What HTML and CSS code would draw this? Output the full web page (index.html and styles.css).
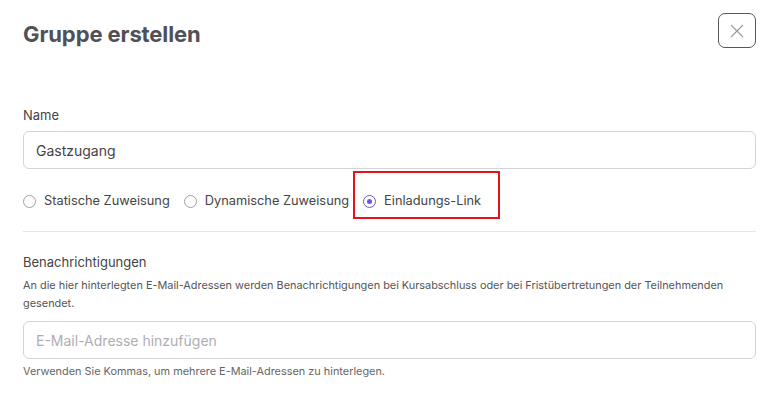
FILE: index.html
```html
<!DOCTYPE html>
<html lang="de">
<head>
<meta charset="utf-8">
<title>Gruppe erstellen</title>
<link rel="stylesheet" href="styles.css">
</head>
<body>
<div class="dialog">
  <div class="header">
    <h1 class="title">Gruppe erstellen</h1>
    <button class="close" aria-label="Schließen">
      <svg width="14" height="14" viewBox="0 0 14 14"><path d="M1 1 L13 13 M13 1 L1 13" stroke="#9a9aa0" stroke-width="1.1" fill="none"/></svg>
    </button>
  </div>

  <div class="field">
    <label class="label">Name</label>
    <div class="input">Gastzugang</div>
  </div>

  <div class="radios">
    <div class="radio"><span class="circle"></span><span class="rlabel">Statische Zuweisung</span></div>
    <div class="radio"><span class="circle"></span><span class="rlabel">Dynamische Zuweisung</span></div>
    <div class="radio highlighted"><span class="circle checked"></span><span class="rlabel">Einladungs-Link</span></div>
  </div>

  <div class="divider"></div>

  <div class="section">
    <div class="label">Benachrichtigungen</div>
    <p class="desc">An die hier hinterlegten E-Mail-Adressen werden Benachrichtigungen bei Kursabschluss oder bei Fristübertretungen der Teilnehmenden gesendet.</p>
    <div class="input placeholder">E-Mail-Adresse hinzufügen</div>
    <p class="hint">Verwenden Sie Kommas, um mehrere E-Mail-Adressen zu hinterlegen.</p>
  </div>
</div>
</body>
</html>
```

FILE: styles.css
```css
* { box-sizing: border-box; }
html, body { margin: 0; padding: 0; background: #fff; }
body { font-family: Inter, "Noto Sans", sans-serif; color: #444; }

.dialog { padding: 0 27px 0 23px; width: 783px; }

.header { display: flex; justify-content: space-between; align-items: flex-start; }
.title { margin: 22px 0 0; font-size: 22px; line-height: 25px; font-weight: 700; color: #505057; letter-spacing: -0.1px; }
.close { margin-top: 13px; width: 38px; height: 35px; border: 1px solid #55555a; border-radius: 7px; background: #fff; display: flex; align-items: center; justify-content: center; padding: 0; }

.field { margin-top: 59px; }
.label { display: block; font-size: 13px; line-height: 16px; color: #444; }
.input { margin-top: 8px; height: 38px; border: 1px solid #d4d4d8; border-radius: 6px; padding: 0 12px; display: flex; align-items: center; font-size: 14px; color: #444; }
.input.placeholder { color: #aeaeb2; margin-top: 9px; }

.radios { display: flex; align-items: center; gap: 14px; margin-top: 24px; height: 16px; }
.radio { display: flex; align-items: center; gap: 8px; position: relative; }
.circle { width: 13px; height: 13px; border: 1px solid #a0a0a5; border-radius: 50%; display: flex; align-items: center; justify-content: center; flex: none; }
.circle.checked { border-color: #6a5ad6; }
.circle.checked::after { content: ""; width: 5px; height: 5px; border-radius: 50%; background: #6a5ad6; }
.rlabel { font-size: 12.8px; line-height: 16px; color: #444; }
.highlighted::after { content: ""; position: absolute; left: -10px; top: -22px; width: 143px; height: 44px; border: 2px solid #e3141f; }

.divider { margin-top: 22px; height: 1px; background: #e6e6e8; }

.section { margin-top: 22px; }
.desc { margin: 6px 0 0; font-size: 10.9px; line-height: 18px; color: #555; }
.hint { margin: 4px 0 0; font-size: 10.9px; line-height: 16px; color: #666; }
```
